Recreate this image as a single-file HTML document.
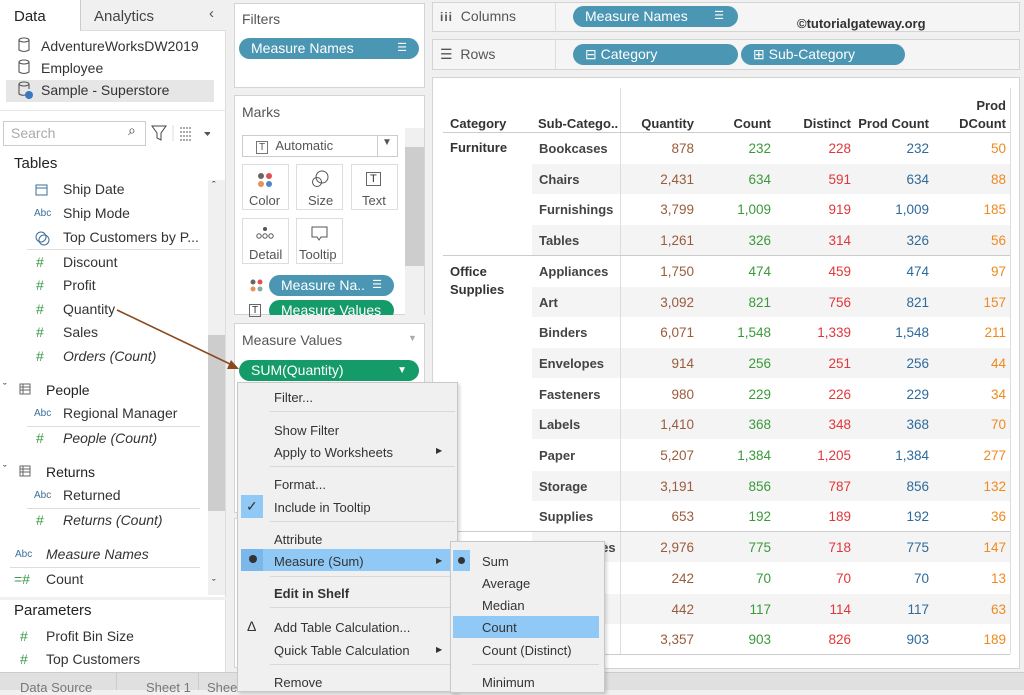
<!DOCTYPE html>
<html><head><meta charset="utf-8"><style>
*{box-sizing:border-box;margin:0;padding:0}
body{width:1024px;height:690px;overflow:hidden;background:#f0f0f0;font-family:"Liberation Sans",sans-serif;font-size:13px;color:#333;position:relative}
.a{position:absolute;white-space:nowrap}
.card{position:absolute;background:#fff;border:1px solid #d4d4d4}
.pill{position:absolute;border-radius:11px;color:#fff;font-size:14px;padding-left:12px;line-height:21px}
.b{background:#4a96b3}.g{background:#159a69}
.hash{color:#3a9a4a;font-size:14px}
.abc{color:#3a6f9a;font-size:10px}
.t td{}
.r{position:absolute;text-align:right;font-size:13.5px}
.q{color:#9a5c3c}.c{color:#3a9a3a}.d{color:#e0373a}.p{color:#2f6a9a}.o{color:#f0891e}
.mi{position:absolute;left:36px;font-size:13px;color:#222}
.sep{position:absolute;height:1px;background:#d8d8d8}
</style></head><body>
<!-- left panel -->
<div class="a" style="left:0;top:0;width:226px;height:672px;background:#fff;border-right:1px solid #ddd"></div>
<div class="a" style="left:80px;top:0;width:146px;height:31px;background:#f0f0f0;border-left:1px solid #ccc;border-bottom:1px solid #ddd"></div>
<div class="a" style="left:14px;top:8px;font-size:15px;color:#222">Data</div>
<div class="a" style="left:94px;top:8px;font-size:15px;color:#444">Analytics</div>
<div class="a" style="left:209px;top:5px;font-size:15px;color:#555">&#8249;</div>
<div class="a" style="left:6px;top:80px;width:208px;height:22px;background:#e6e6e6"></div>
<svg class="a" style="left:17px;top:37px" width="16" height="64"><g fill="none" stroke="#555" stroke-width="1.1"><ellipse cx="7" cy="3" rx="5" ry="2"/><path d="M2 3v10q5 3 10 0V3"/><ellipse cx="7" cy="25" rx="5" ry="2"/><path d="M2 25v10q5 3 10 0V25"/><ellipse cx="7" cy="47" rx="5" ry="2"/><path d="M2 47v10q3 2 6 1M12 47v5"/></g><circle cx="12" cy="58" r="4" fill="#3a78c0"/></svg>
<div class="a" style="left:41px;top:38px;font-size:14px">AdventureWorksDW2019</div>
<div class="a" style="left:41px;top:60px;font-size:14px">Employee</div>
<div class="a" style="left:41px;top:82px;font-size:14px">Sample - Superstore</div>
<div class="a" style="left:0;top:110px;width:226px;height:1px;background:#e6e6e6"></div>
<div class="a" style="left:3px;top:121px;width:143px;height:25px;border:1px solid #ccc;background:#fff"></div>
<div class="a" style="left:11px;top:125px;font-size:14px;color:#aaa">Search</div>
<div class="a" style="left:128px;top:122px;font-size:14px;color:#444">&#8981;</div>
<svg class="a" style="left:150px;top:124px" width="60" height="18"><path d="M2 2h14l-5 7v7l-4-2V9z" fill="none" stroke="#444"/><line x1="23" y1="1" x2="23" y2="17" stroke="#ddd"/><g stroke="#555"><path d="M30 4h12M30 8h12M30 12h12M30 16h12" stroke-dasharray="2 1"/></g><path d="M54 8h7l-3.5 4z" fill="#555"/></svg>
<div class="a" style="left:14px;top:155px;font-size:15px;color:#222">Tables</div>
<div class="a" style="left:208px;top:180px;width:17px;height:415px;background:#f0f0f0"></div>
<div class="a" style="left:208px;top:335px;width:17px;height:176px;background:#cdcdcd"></div>
<div class="a" style="left:212px;top:180px;font-size:11px">&#710;</div>
<div class="a" style="left:212px;top:578px;font-size:11px">&#711;</div>
<svg class="a" style="left:35px;top:183px" width="14" height="14"><rect x="1" y="2" width="11" height="10" fill="none" stroke="#3a6f9a"/><line x1="1" y1="5" x2="12" y2="5" stroke="#3a6f9a"/></svg>
<div class="a" style="left:63px;top:181px;font-size:14px">Ship Date</div>
<div class="a abc" style="left:34px;top:208px">Abc</div><div class="a" style="left:63px;top:205px;font-size:14px">Ship Mode</div>
<svg class="a" style="left:35px;top:230px" width="16" height="16"><circle cx="6" cy="7" r="5" fill="none" stroke="#3a6f9a"/><circle cx="9" cy="10" r="5" fill="none" stroke="#3a6f9a"/></svg>
<div class="a" style="left:63px;top:229px;font-size:14px">Top Customers by P...</div>
<div class="a" style="left:27px;top:249px;width:173px;height:1px;background:#ddd"></div>
<div class="a hash" style="left:36px;top:254px">#</div><div class="a" style="left:63px;top:254px;font-size:14px">Discount</div>
<div class="a hash" style="left:36px;top:277px">#</div><div class="a" style="left:63px;top:277px;font-size:14px">Profit</div>
<div class="a hash" style="left:36px;top:301px">#</div><div class="a" style="left:63px;top:301px;font-size:14px">Quantity</div>
<div class="a hash" style="left:36px;top:324px">#</div><div class="a" style="left:63px;top:324px;font-size:14px">Sales</div>
<div class="a hash" style="left:36px;top:348px">#</div><div class="a" style="left:63px;top:348px;font-size:14px;font-style:italic">Orders (Count)</div>
<div class="a" style="left:3px;top:382px;font-size:11px">&#711;</div>
<svg class="a" style="left:19px;top:383px" width="13" height="12"><rect x="1" y="1" width="10" height="10" fill="none" stroke="#666"/><path d="M1 4h10M1 7h10M4 1v10" stroke="#666"/></svg>
<div class="a" style="left:46px;top:382px;font-size:14px;color:#222">People</div>
<div class="a abc" style="left:34px;top:408px">Abc</div><div class="a" style="left:63px;top:405px;font-size:14px">Regional Manager</div>
<div class="a" style="left:27px;top:426px;width:173px;height:1px;background:#ddd"></div>
<div class="a hash" style="left:36px;top:430px">#</div><div class="a" style="left:63px;top:430px;font-size:14px;font-style:italic">People (Count)</div>
<div class="a" style="left:3px;top:464px;font-size:11px">&#711;</div>
<svg class="a" style="left:19px;top:465px" width="13" height="12"><rect x="1" y="1" width="10" height="10" fill="none" stroke="#666"/><path d="M1 4h10M1 7h10M4 1v10" stroke="#666"/></svg>
<div class="a" style="left:46px;top:464px;font-size:14px;color:#222">Returns</div>
<div class="a abc" style="left:34px;top:490px">Abc</div><div class="a" style="left:63px;top:487px;font-size:14px">Returned</div>
<div class="a" style="left:27px;top:508px;width:173px;height:1px;background:#ddd"></div>
<div class="a hash" style="left:36px;top:512px">#</div><div class="a" style="left:63px;top:512px;font-size:14px;font-style:italic">Returns (Count)</div>
<div class="a abc" style="left:15px;top:549px">Abc</div><div class="a" style="left:46px;top:546px;font-size:14px;font-style:italic">Measure Names</div>
<div class="a" style="left:10px;top:567px;width:190px;height:1px;background:#ddd"></div>
<div class="a hash" style="left:14px;top:571px">=#</div><div class="a" style="left:46px;top:571px;font-size:14px">Count</div>
<div class="a" style="left:0;top:597px;width:226px;height:3px;background:#f0f0f0"></div>
<div class="a" style="left:14px;top:602px;font-size:15px;color:#222">Parameters</div>
<div class="a hash" style="left:20px;top:628px">#</div><div class="a" style="left:46px;top:628px;font-size:14px">Profit Bin Size</div>
<div class="a hash" style="left:20px;top:651px">#</div><div class="a" style="left:46px;top:651px;font-size:14px">Top Customers</div>
<div class="a" style="left:0;top:672px;width:1024px;height:18px;background:#e0e0e0;border-top:1px solid #ccc"></div>
<div class="a" style="left:20px;top:680px;font-size:13px;color:#777">Data Source</div>
<div class="a" style="left:116px;top:673px;width:1px;height:17px;background:#ccc"></div>
<div class="a" style="left:146px;top:680px;font-size:13px;color:#777">Sheet 1</div>
<div class="a" style="left:198px;top:673px;width:1px;height:17px;background:#ccc"></div>
<div class="a" style="left:207px;top:680px;font-size:13px;color:#777">Sheet</div>

<!-- middle cards -->
<div class="card" style="left:234px;top:3px;width:191px;height:85px"></div>
<div class="a" style="left:242px;top:11px;font-size:14px;color:#555">Filters</div>
<div class="pill b" style="left:239px;top:38px;width:180px">Measure Names<span style="position:absolute;right:12px;font-size:11px">&#9776;</span></div>
<div class="card" style="left:234px;top:95px;width:191px;height:220px"></div>
<div class="a" style="left:242px;top:104px;font-size:14px;color:#555">Marks</div>
<div class="a" style="left:242px;top:135px;width:156px;height:22px;border:1px solid #ccc;background:#fff"></div>
<div class="a" style="left:377px;top:135px;width:1px;height:22px;background:#ccc"></div>
<div class="a" style="left:256px;top:138px;font-size:13px;color:#555"><span style="font-size:10px;border:1px solid #777;padding:0 2px">T</span> &nbsp;Automatic</div>
<div class="a" style="left:382px;top:137px;font-size:10px;color:#555">&#9660;</div>
<div class="a" style="left:405px;top:128px;width:19px;height:187px;background:#f0f0f0"></div>
<div class="a" style="left:405px;top:147px;width:19px;height:119px;background:#cdcdcd"></div>
<div class="a" style="left:242px;top:164px;width:47px;height:46px;border:1px solid #ddd;background:#fff"></div>
<div class="a" style="left:296px;top:164px;width:47px;height:46px;border:1px solid #ddd;background:#fff"></div>
<div class="a" style="left:351px;top:164px;width:47px;height:46px;border:1px solid #ddd;background:#fff"></div>
<div class="a" style="left:242px;top:218px;width:47px;height:46px;border:1px solid #ddd;background:#fff"></div>
<div class="a" style="left:296px;top:218px;width:47px;height:46px;border:1px solid #ddd;background:#fff"></div>
<svg class="a" style="left:257px;top:172px" width="16" height="16"><circle cx="4" cy="4" r="3" fill="#666"/><circle cx="12" cy="4" r="3" fill="#e05050"/><circle cx="4" cy="12" r="3" fill="#e8905a"/><circle cx="12" cy="12" r="3" fill="#4a8ac0"/></svg>
<svg class="a" style="left:311px;top:170px" width="18" height="18"><circle cx="11" cy="7" r="6" fill="none" stroke="#555"/><circle cx="6" cy="12" r="4.5" fill="none" stroke="#555"/></svg>
<div class="a" style="left:366px;top:172px;font-size:11px;border:1px solid #666;padding:0 3px;line-height:12px">T</div>
<svg class="a" style="left:255px;top:226px" width="20" height="14"><circle cx="10" cy="3" r="2" fill="#555"/><circle cx="4" cy="10" r="2.2" fill="none" stroke="#555"/><circle cx="10" cy="10" r="2.2" fill="none" stroke="#555"/><circle cx="16" cy="10" r="2.2" fill="none" stroke="#555"/></svg>
<svg class="a" style="left:311px;top:226px" width="18" height="16"><path d="M1 1h15v10h-6l-2 3-2-3H1z" fill="none" stroke="#555"/></svg>
<div class="a" style="left:249px;top:193px;font-size:13px;color:#555">Color</div>
<div class="a" style="left:308px;top:193px;font-size:13px;color:#555">Size</div>
<div class="a" style="left:362px;top:193px;font-size:13px;color:#555">Text</div>
<div class="a" style="left:249px;top:247px;font-size:13px;color:#555">Detail</div>
<div class="a" style="left:299px;top:247px;font-size:13px;color:#555">Tooltip</div>
<svg class="a" style="left:250px;top:279px" width="14" height="14"><circle cx="3" cy="3" r="2.5" fill="#666"/><circle cx="10" cy="3" r="2.5" fill="#e05050"/><circle cx="3" cy="10" r="2.5" fill="#e8905a"/><circle cx="10" cy="10" r="2.5" fill="#8aa"/></svg>
<div class="pill b" style="left:269px;top:275px;width:125px">Measure Na..<span style="position:absolute;right:12px;font-size:11px">&#9776;</span></div>
<div class="a" style="left:249px;top:304px;font-size:10px;border:1px solid #666;padding:0 2px;line-height:11px">T</div>
<div class="a" style="left:234px;top:300px;width:170px;height:15px;overflow:hidden"><div class="pill g" style="left:35px;top:0;width:125px;height:21px">Measure Values</div></div>
<div class="card" style="left:234px;top:323px;width:191px;height:190px"></div>
<div class="a" style="left:242px;top:332px;font-size:14px;color:#555">Measure Values</div>
<div class="a" style="left:408px;top:333px;font-size:9px;color:#aaa">&#9660;</div>
<div class="pill g" style="left:239px;top:360px;width:180px">SUM(Quantity)<span style="position:absolute;right:12px;font-size:10px">&#9660;</span></div>
<div class="card" style="left:234px;top:518px;width:191px;height:150px"></div>
<div class="a" style="left:238px;top:558px;width:3px;height:14px;background:#9a5c3c"></div>
<div class="a" style="left:238px;top:580px;width:3px;height:14px;background:#3a9a3a"></div>
<div class="a" style="left:238px;top:602px;width:3px;height:14px;background:#e0373a"></div>
<div class="a" style="left:238px;top:623px;width:3px;height:14px;background:#2f6a9a"></div>
<div class="a" style="left:238px;top:644px;width:3px;height:14px;background:#f0891e"></div>

<!-- shelves -->
<div class="card" style="left:432px;top:2px;width:588px;height:30px;background:#f5f5f5"></div>
<div class="a" style="left:555px;top:2px;width:1px;height:30px;background:#ddd"></div>
<div class="a" style="left:440px;top:8px;font-size:14px;color:#555"><b style="letter-spacing:1px;font-size:12px">iii</b>&nbsp; Columns</div>
<div class="pill b" style="left:573px;top:6px;width:165px">Measure Names<span style="position:absolute;right:14px;font-size:11px">&#9776;</span></div>
<div class="a" style="left:797px;top:16px;font-size:13px;font-weight:bold;color:#333">&copy;tutorialgateway.org</div>
<div class="card" style="left:432px;top:39px;width:588px;height:31px;background:#f5f5f5"></div>
<div class="a" style="left:555px;top:39px;width:1px;height:31px;background:#ddd"></div>
<div class="a" style="left:440px;top:46px;font-size:14px;color:#555">&#9776;&nbsp; Rows</div>
<div class="pill b" style="left:573px;top:44px;width:165px">&#8863; Category</div>
<div class="pill b" style="left:741px;top:44px;width:164px">&#8862; Sub-Category</div>

<!-- view -->
<div class="card" style="left:432px;top:77px;width:588px;height:592px"></div>
<div id="rows"></div>
<div class="a" style="left:620px;top:88px;width:1px;height:566px;background:#ddd"></div>
<div class="a" style="left:1010px;top:88px;width:1px;height:566px;background:#ddd"></div>
<div class="a" style="left:443px;top:132px;width:567px;height:1px;background:#ccc"></div>
<div class="a" style="left:443px;top:255px;width:567px;height:1px;background:#ccc"></div>
<div class="a" style="left:443px;top:531px;width:567px;height:1px;background:#ccc"></div>
<div class="a" style="left:443px;top:654px;width:567px;height:1px;background:#ccc"></div>
<div class="a" style="left:450px;top:116px;font-weight:bold;font-size:13px">Category</div>
<div class="a" style="left:538px;top:116px;font-weight:bold;font-size:13px">Sub-Catego..</div>
<div class="r" style="right:330px;top:116px;font-weight:bold;font-size:13px">Quantity</div>
<div class="r" style="right:253px;top:116px;font-weight:bold;font-size:13px">Count</div>
<div class="r" style="right:173px;top:116px;font-weight:bold;font-size:13px">Distinct</div>
<div class="r" style="right:95px;top:116px;font-weight:bold;font-size:13px">Prod Count</div>
<div class="r" style="right:18px;top:97px;font-weight:bold;font-size:13px;line-height:18px">Prod<br>DCount</div>
<div class="a" style="left:450px;top:140px;font-weight:bold">Furniture</div>
<div class="a" style="left:450px;top:263px;font-weight:bold;line-height:18px">Office<br>Supplies</div>
<div class="a" style="left:443px;top:539px;font-weight:bold;width:90px;overflow:hidden;text-indent:-10px">Technology</div>
<script>
var d=[["Bookcases","878","232","228","232","50"],["Chairs","2,431","634","591","634","88"],["Furnishings","3,799","1,009","919","1,009","185"],["Tables","1,261","326","314","326","56"],["Appliances","1,750","474","459","474","97"],["Art","3,092","821","756","821","157"],["Binders","6,071","1,548","1,339","1,548","211"],["Envelopes","914","256","251","256","44"],["Fasteners","980","229","226","229","34"],["Labels","1,410","368","348","368","70"],["Paper","5,207","1,384","1,205","1,384","277"],["Storage","3,191","856","787","856","132"],["Supplies","653","192","189","192","36"],["Accessories","2,976","775","718","775","147"],["Copiers","242","70","70","70","13"],["Machines","442","117","114","117","63"],["Phones","3,357","903","826","903","189"]];
var h="",cls=["q","c","d","p","o"],rt=[330,253,173,95,18];
d.forEach(function(r,i){var t=133+i*30.7;
if(i%2==1)h+='<div class="a" style="left:532px;top:'+t+'px;width:478px;height:30px;background:#f4f4f4"></div>';
h+='<div class="a" style="left:539px;top:'+(t+8)+'px;font-weight:bold;color:#444">'+r[0]+'</div>';
for(var k=0;k<5;k++)h+='<div class="r '+cls[k]+'" style="right:'+rt[k]+'px;top:'+(t+8)+'px">'+r[k+1]+'</div>';});
document.getElementById("rows").innerHTML=h;
</script>

<!-- arrow -->
<svg class="a" style="left:0;top:0" width="300" height="400"><line x1="117" y1="310" x2="230" y2="364" stroke="#8a4a20" stroke-width="1.6"/><path d="M239 369l-12 0l4-9z" fill="#8a4a20"/></svg>

<!-- context menu -->
<div class="a" style="left:237px;top:382px;width:221px;height:310px;background:#f0f0f0;border:1px solid #c8c8c8;box-shadow:2px 2px 3px rgba(0,0,0,.15)"></div>
<div class="a" style="left:241px;top:495px;width:22px;height:23px;background:#90c8f6"></div>
<div class="a" style="left:246px;top:498px;font-size:14px;color:#333">&#10003;</div>
<div class="a" style="left:241px;top:549px;width:214px;height:22px;background:#90c8f6"></div>
<div class="a" style="left:241px;top:549px;width:22px;height:22px;background:#7ab7ea"></div>
<div class="a" style="left:249px;top:555px;width:8px;height:8px;border-radius:4px;background:#333"></div>
<div class="sep" style="left:270px;top:411px;width:185px"></div>
<div class="sep" style="left:270px;top:466px;width:185px"></div>
<div class="sep" style="left:270px;top:521px;width:185px"></div>
<div class="sep" style="left:270px;top:576px;width:185px"></div>
<div class="sep" style="left:270px;top:607px;width:185px"></div>
<div class="sep" style="left:270px;top:664px;width:185px"></div>
<div class="a" style="left:274px;top:390px">Filter...</div>
<div class="a" style="left:274px;top:423px">Show Filter</div>
<div class="a" style="left:274px;top:445px">Apply to Worksheets</div>
<div class="a" style="left:274px;top:477px">Format...</div>
<div class="a" style="left:274px;top:500px">Include in Tooltip</div>
<div class="a" style="left:274px;top:532px">Attribute</div>
<div class="a" style="left:274px;top:554px">Measure (Sum)</div>
<div class="a" style="left:274px;top:586px;font-weight:bold">Edit in Shelf</div>
<div class="a" style="left:247px;top:618px;font-size:14px">&#916;</div>
<div class="a" style="left:274px;top:620px">Add Table Calculation...</div>
<div class="a" style="left:274px;top:643px">Quick Table Calculation</div>
<div class="a" style="left:274px;top:675px">Remove</div>
<div class="a" style="left:436px;top:446px;font-size:8px">&#9654;</div>
<div class="a" style="left:436px;top:556px;font-size:8px">&#9654;</div>
<div class="a" style="left:436px;top:645px;font-size:8px">&#9654;</div>
<!-- submenu -->
<div class="a" style="left:450px;top:541px;width:155px;height:152px;background:#f0f0f0;border:1px solid #c8c8c8;box-shadow:2px 2px 3px rgba(0,0,0,.15)"></div>
<div class="a" style="left:453px;top:550px;width:17px;height:21px;background:#90c8f6"></div>
<div class="a" style="left:458px;top:557px;width:7px;height:7px;border-radius:4px;background:#333"></div>
<div class="a" style="left:453px;top:616px;width:146px;height:22px;background:#90c8f6"></div>
<div class="sep" style="left:472px;top:664px;width:127px"></div>
<div class="a" style="left:482px;top:554px">Sum</div>
<div class="a" style="left:482px;top:576px">Average</div>
<div class="a" style="left:482px;top:598px">Median</div>
<div class="a" style="left:482px;top:620px">Count</div>
<div class="a" style="left:482px;top:643px">Count (Distinct)</div>
<div class="a" style="left:482px;top:675px">Minimum</div>
</body></html>
